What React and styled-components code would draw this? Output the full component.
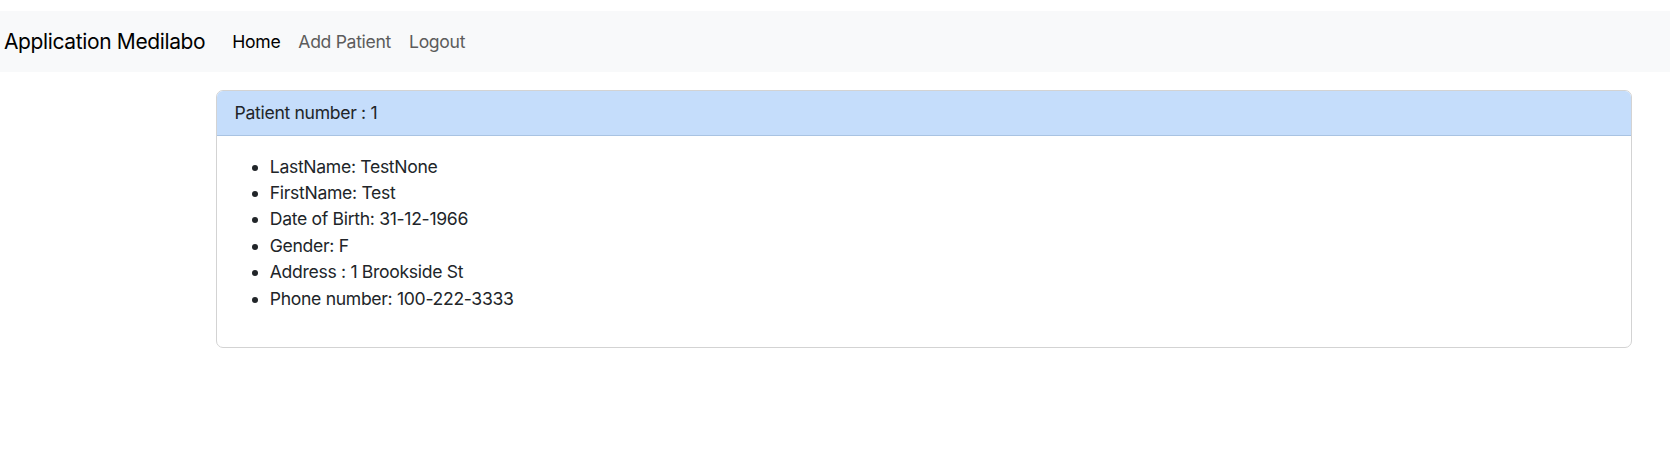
import React from 'react';
import styled, { createGlobalStyle } from 'styled-components';

const patient = {
  id: 1,
  lastName: 'TestNone',
  firstName: 'Test',
  birthDate: '31-12-1966',
  gender: 'F',
  address: '1 Brookside St',
  phone: '100-222-3333',
};

const GlobalStyle = createGlobalStyle`
  body {
    margin: 0;
    background: #fff;
    font-family: Inter, "Liberation Sans", Arial, sans-serif;
    color: #212529;
  }
`;

const App = () => {
  return (
    <>
      <GlobalStyle />
      <Page>
        <NavBar>
          <Brand>Application Medilabo</Brand>
          <NavLinks>
            <NavLink active>Home</NavLink>
            <NavLink>Add Patient</NavLink>
            <NavLink>Logout</NavLink>
          </NavLinks>
        </NavBar>

        <Main>
          <Card>
            <CardHeader>Patient number : {patient.id}</CardHeader>
            <CardBody>
              <InfoList>
                <li>LastName: {patient.lastName}</li>
                <li>FirstName: {patient.firstName}</li>
                <li>Date of Birth: {patient.birthDate}</li>
                <li>Gender: {patient.gender}</li>
                <li>Address : {patient.address}</li>
                <li>Phone number: {patient.phone}</li>
              </InfoList>
            </CardBody>
          </Card>
        </Main>
      </Page>
    </>
  );
};

export default App;

const Page = styled.div`
  padding-top: 11px;
`;

const NavBar = styled.nav`
  display: flex;
  align-items: center;
  height: 61px;
  background-color: #f8f9fa;
  padding-left: 4px;
`;

const Brand = styled.span`
  font-size: 21px;
  letter-spacing: -0.37px;
  color: #000;
  margin-right: 27px;
`;

const NavLinks = styled.div`
  display: flex;
  gap: 18px;
`;

const NavLink = styled.span`
  font-size: 17.6px;
  letter-spacing: -0.32px;
  color: ${props => (props.active ? '#000' : '#5c5c5c')};
  cursor: pointer;
`;

const Main = styled.div`
  padding: 18px 38px 0 216px;
`;

const Card = styled.div`
  border: 1px solid #d3d3d3;
  border-radius: 7px;
  overflow: hidden;
`;

const CardHeader = styled.div`
  background-color: #c5ddfb;
  border-bottom: 1px solid #a9c3e2;
  padding: 8.8px 17.6px;
  font-size: 17.6px;
  letter-spacing: -0.32px;
  line-height: 26.4px;
`;

const CardBody = styled.div`
  padding: 17.6px;
`;

const InfoList = styled.ul`
  margin: 0 0 17.6px;
  padding-left: 35.2px;
  font-size: 17.6px;
  letter-spacing: -0.32px;
  line-height: 26.4px;
`;
